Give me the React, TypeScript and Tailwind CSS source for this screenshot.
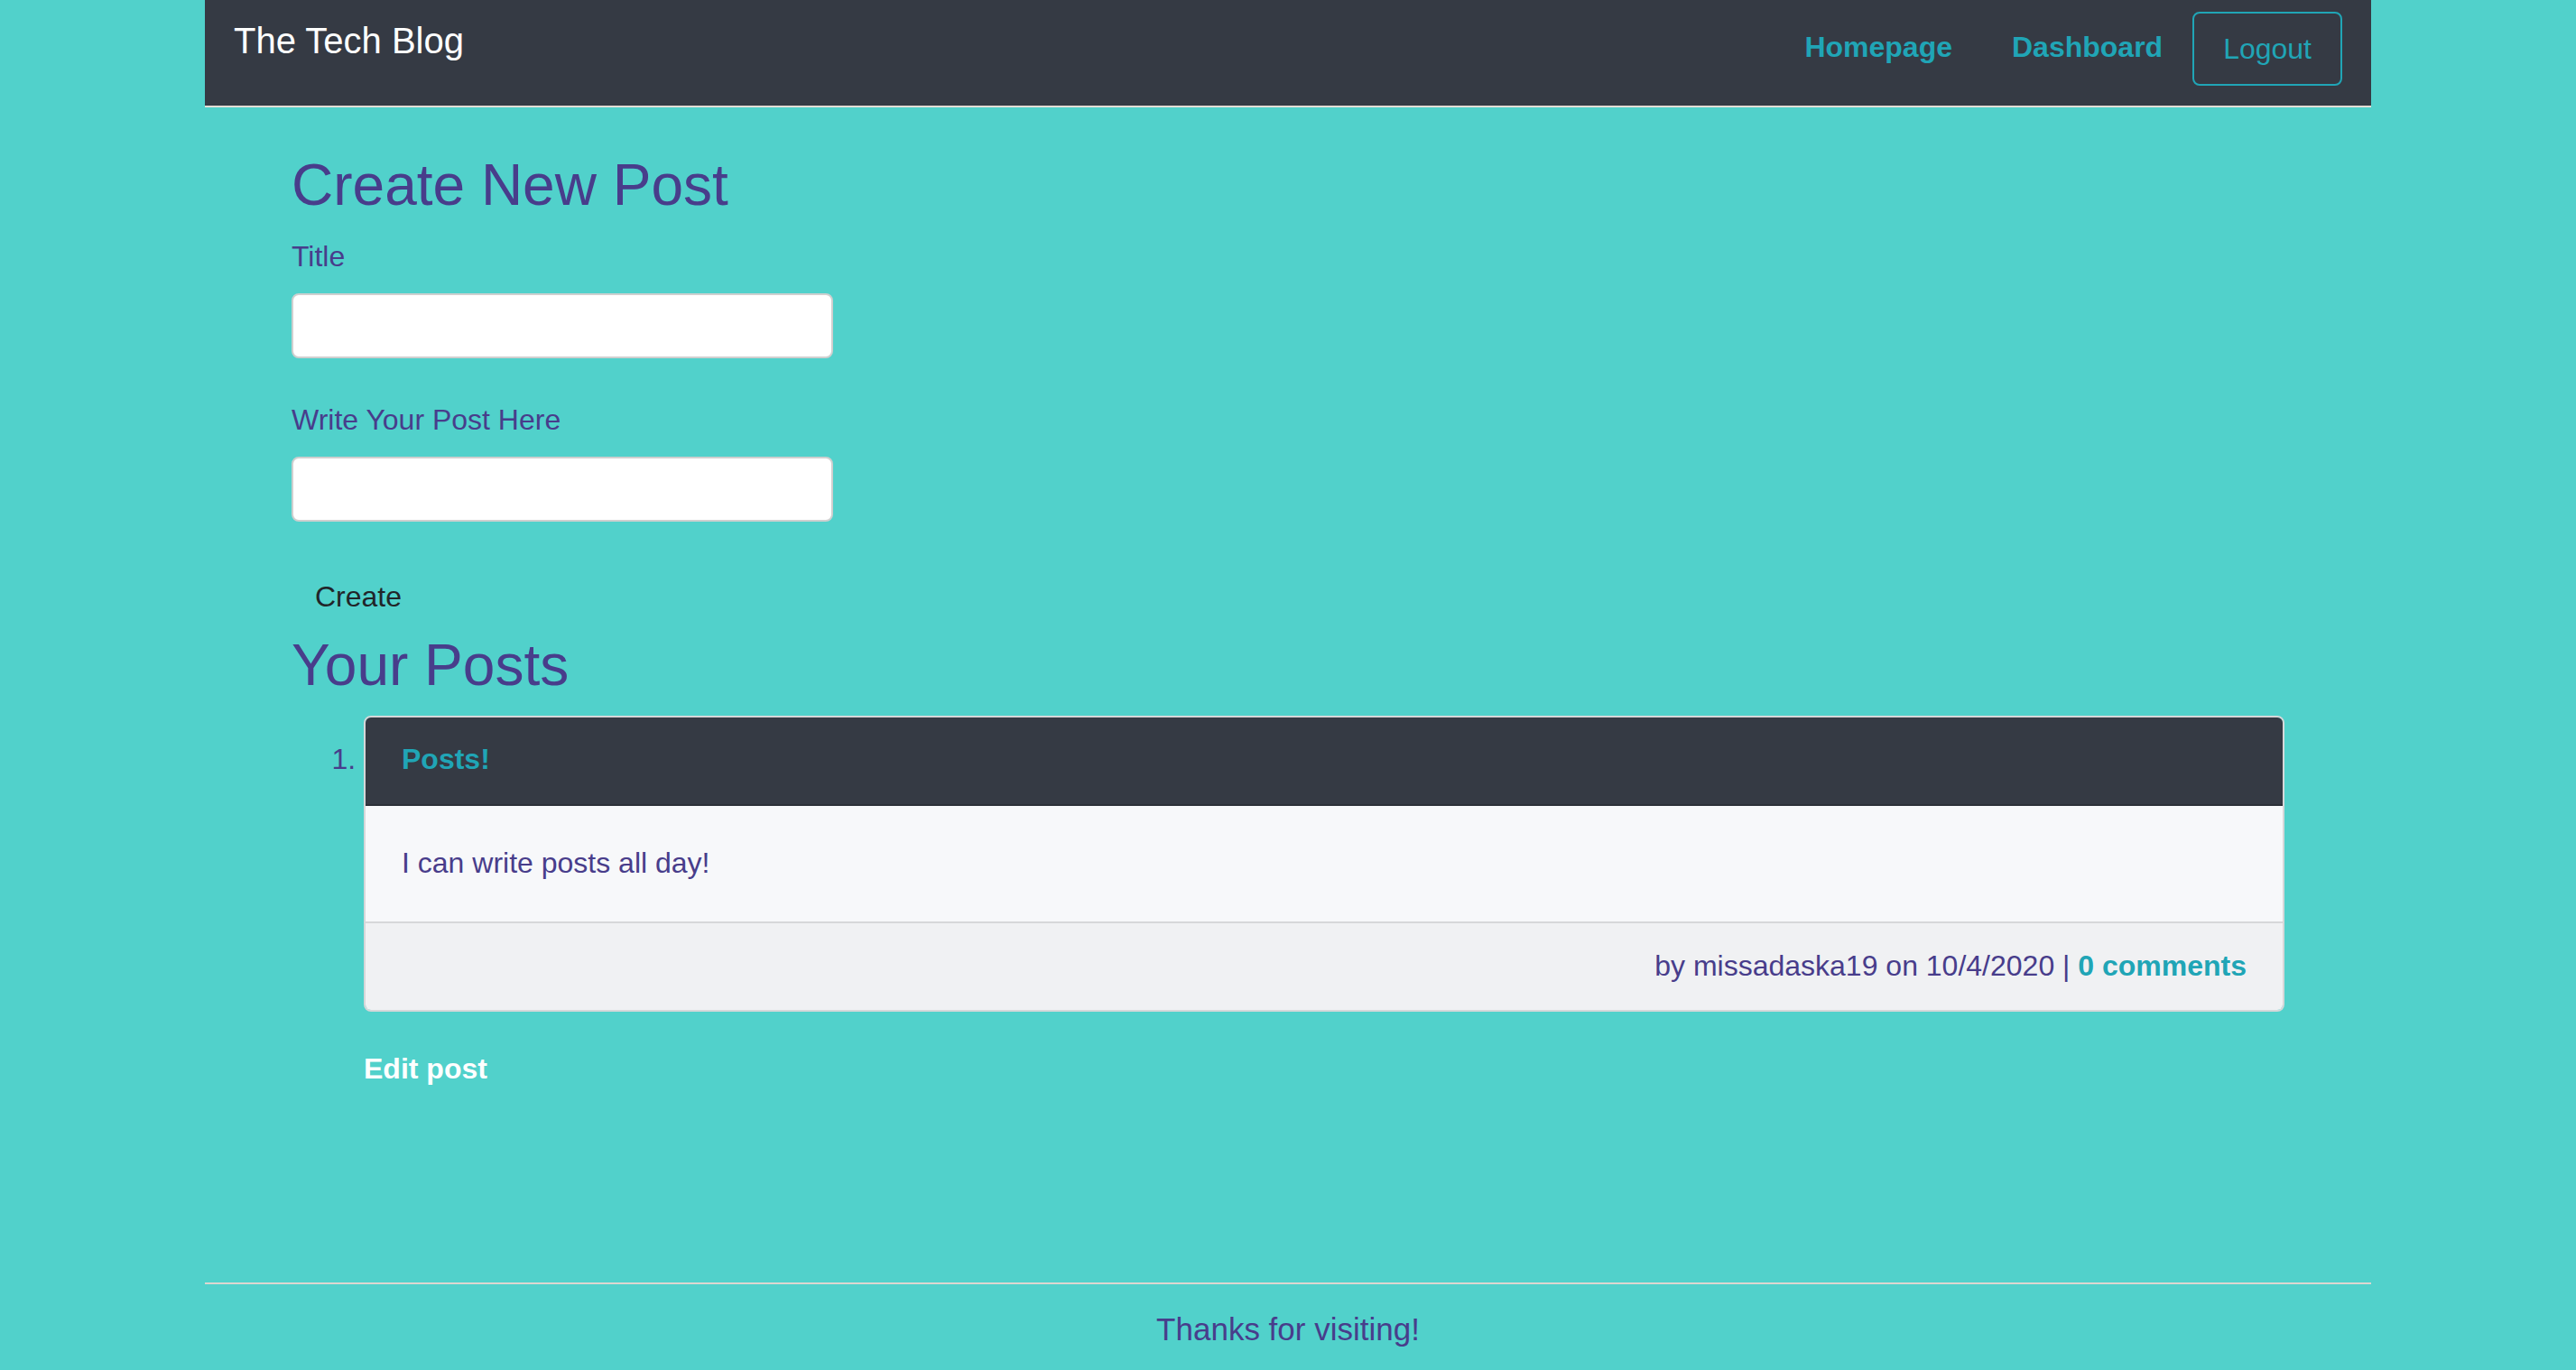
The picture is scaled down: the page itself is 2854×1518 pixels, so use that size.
const posts = [
  {
    title: "Posts!",
    body: "I can write posts all day!",
    author: "missadaska19",
    date: "10/4/2020",
    comments: 0,
  },
];

const Header = () => (
  <header className="w-[2400px] mx-auto h-[119px] bg-[#353a44] border-b-2 border-[#e2ddd6] px-8 flex items-start justify-between">
    <h1 className="pt-[21px] text-[40px] leading-[48px] text-white font-normal">The Tech Blog</h1>
    <nav className="mt-[13px] flex items-center">
      <a className="px-[33px] pb-[5px] text-[32px] leading-[48px] font-bold text-[#20a5b6]">Homepage</a>
      <a className="px-[33px] pb-[5px] text-[32px] leading-[48px] font-bold text-[#20a5b6]">Dashboard</a>
      <button className="h-[82px] px-8 border-2 border-[#20a5b6] rounded-lg text-[32px] leading-[48px] text-[#20a5b6]">
        Logout
      </button>
    </nav>
  </header>
);

const App = () => {
  return (
    <div className="min-h-screen flex flex-col bg-[#51d1cb] font-['Liberation_Sans',Arial,sans-serif]">
      <Header />

      <main className="flex-1 w-[2400px] mx-auto px-24">
        {/* New post form */}
        <h2 className="mt-[48px] mb-4 text-[64px] leading-[77px] text-[#483d8b]">Create New Post</h2>
        <form onSubmit={(e) => e.preventDefault()}>
          <label className="block mb-[17px] text-[32px] leading-[48px] text-[#483d8b]">Title</label>
          <input className="block w-[600px] h-[72px] px-6 bg-white border-2 border-[#cfcfcf] rounded-lg text-[32px]" />
          <label className="block mt-[44px] mb-[17px] text-[32px] leading-[48px] text-[#483d8b]">
            Write Your Post Here
          </label>
          <input className="block w-[600px] h-[72px] px-6 bg-white border-2 border-[#cfcfcf] rounded-lg text-[32px]" />
          <button className="block mt-[45px] px-6 py-3 border-2 border-transparent text-[32px] leading-[48px] text-[#212529]">
            Create
          </button>
        </form>

        {/* Posts */}
        <h2 className="text-[64px] leading-[77px] text-[#483d8b]">Your Posts</h2>
        <ol className="mt-[17px] list-decimal pl-[80px]">
          {posts.map((post) => (
            <li key={post.title} className="text-[32px] leading-[48px] text-[#483d8b]">
              <div className="border-2 border-[#d6d7d9] rounded-lg overflow-hidden">
                <div className="bg-[#353a44] px-10 pt-[22px] pb-[26px] border-b-2 border-[#2c3038] font-bold text-[#20a5b6]">
                  {post.title}
                </div>
                <div className="bg-[#f7f8fa] px-10 pt-[39px] pb-[41px]">{post.body}</div>
                <div className="bg-[#f0f1f3] border-t-2 border-[#d6d7d9] px-10 pt-[23px] pb-[25px] text-right">
                  by {post.author} on {post.date} |{" "}
                  <a className="font-bold text-[#20a5b6]">{post.comments} comments</a>
                </div>
              </div>
              <a className="block mt-[39px] font-bold text-white">Edit post</a>
            </li>
          ))}
        </ol>
      </main>

      <footer className="w-[2400px] mx-auto border-t-2 border-[#dcd6d0] pt-6 pb-5 text-center text-[35px] leading-[51px] text-[#483d8b]">
        Thanks for visiting!
      </footer>
    </div>
  );
};

export default App;
